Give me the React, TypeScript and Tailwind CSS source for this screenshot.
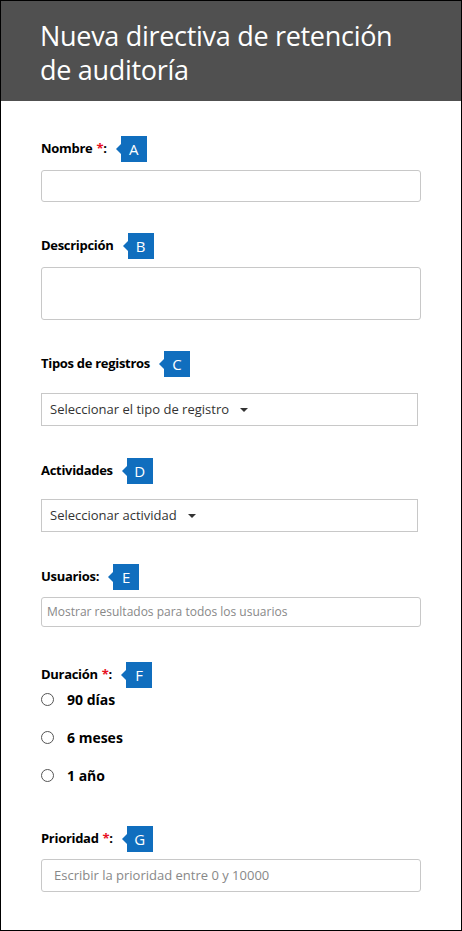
import React from 'react';

const font = { fontFamily: '"Open Sans", "Noto Sans", sans-serif' };

const Badge: React.FC<{ letter: string }> = ({ letter }) => (
  <div className="ml-[9px] flex items-center">
    <div className="h-0 w-0 border-y-[5px] border-r-[5px] border-y-transparent border-r-[#106ebe]" />
    <div className="flex h-[26px] w-[26px] items-center justify-center bg-[#106ebe] text-[15px] text-white">
      {letter}
    </div>
  </div>
);

const Label: React.FC<{ text: string; required?: boolean; colon?: boolean; letter: string; className?: string }> = ({
  text,
  required,
  colon,
  letter,
  className = '',
}) => (
  <div className={`flex items-center ${className}`}>
    <span className="text-[13px] font-bold tracking-[-0.3px] text-black">
      {text}
      {required && <span className="ml-[4px] text-[#e81123]">*</span>}
      {colon && ':'}
    </span>
    <Badge letter={letter} />
  </div>
);

const Caret = () => (
  <svg width="8" height="4" viewBox="0 0 8 4" className="ml-[11px]">
    <path d="M0 0h8L4 4z" fill="#333" />
  </svg>
);

const Radio: React.FC<{ label: string }> = ({ label }) => (
  <div className="flex h-[38px] items-center">
    <div className="h-[13px] w-[13px] rounded-full border border-[#555] bg-white" />
    <span className="ml-[13px] text-[14px] font-bold text-black">{label}</span>
  </div>
);

export default function App() {
  return (
    <div className="h-[931px] w-[462px] overflow-hidden border border-black bg-white" style={font}>
      <div className="h-[100px] bg-[#505050] pl-[39px] pt-[18px]">
        <h1 className="text-[27px] font-normal leading-[34px] tracking-[-0.3px] text-white">
          Nueva directiva de retención
          <br />
          de auditoría
        </h1>
      </div>

      <div className="px-[40px]">
        <Label text="Nombre" required colon letter="A" className="mt-[35px]" />
        <div className="mt-[8px] h-[32px] w-[380px] rounded-[3px] border border-[#c8c8c8]" />

        <Label text="Descripción" letter="B" className="mt-[31px]" />
        <div className="mt-[8px] h-[53px] w-[380px] rounded-[3px] border border-[#c8c8c8]" />

        <Label text="Tipos de registros" letter="C" className="mt-[31px]" />
        <div className="mt-[16px] flex h-[33px] w-[377px] items-center border border-[#c8c8c8] pl-[8px] text-[13px] text-[#333]">
          Seleccionar el tipo de registro
          <Caret />
        </div>

        <Label text="Actividades" letter="D" className="mt-[32px]" />
        <div className="mt-[15px] flex h-[33px] w-[377px] items-center border border-[#c8c8c8] pl-[8px] text-[13px] text-[#333]">
          Seleccionar actividad
          <Caret />
        </div>

        <Label text="Usuarios" colon letter="E" className="mt-[32px]" />
        <div className="mt-[7px] flex h-[30px] w-[380px] items-center rounded-[3px] border border-[#c8c8c8] pl-[5px] text-[12px] text-[#888]">
          Mostrar resultados para todos los usuarios
        </div>

        <Label text="Duración" required colon letter="F" className="mt-[35px]" />
        <div className="-mt-[8px]">
          <Radio label="90 días" />
          <Radio label="6 meses" />
          <Radio label="1 año" />
        </div>

        <Label text="Prioridad" required colon letter="G" className="mt-[32px]" />
        <div className="mt-[7px] flex h-[33px] w-[380px] items-center rounded-[3px] border border-[#c8c8c8] pl-[12px] text-[13px] text-[#888]">
          Escribir la prioridad entre 0 y 10000
        </div>
      </div>
    </div>
  );
}
